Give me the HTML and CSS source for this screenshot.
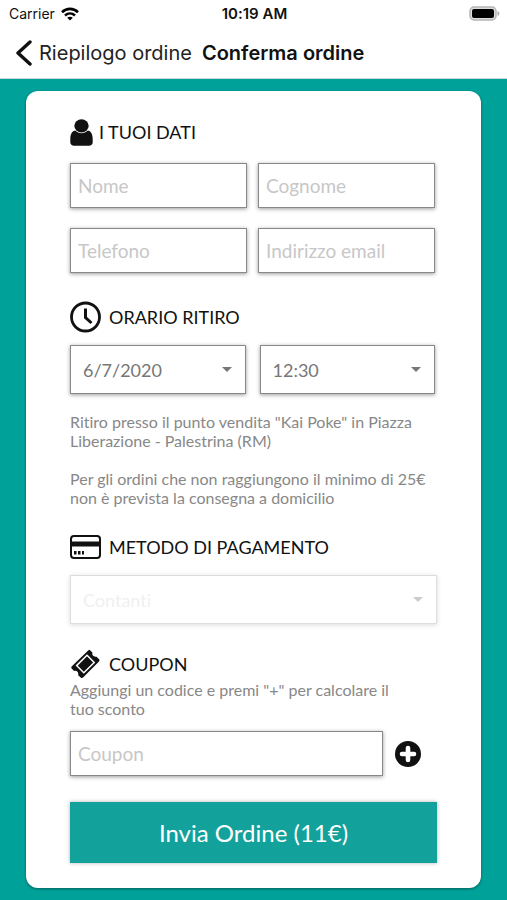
FILE: index.html
```html
<!DOCTYPE html>
<html lang="it">
<head>
  <meta charset="UTF-8" />
  <meta name="viewport" content="width=device-width, initial-scale=1.0"/>
  <title>Conferma ordine</title>
  <link rel="stylesheet" href="styles.css">
</head>
<body>
  <header>
    <div class="status">
      <span class="carrier">Carrier
        <svg width="18" height="14" viewBox="0 0 18 14" fill="none" stroke="#000" stroke-width="2.6">
          <path d="M1 5.2C5.6.8 12.4.8 17 5.2"/>
          <path d="M4 8.5C7 5.8 11 5.8 14 8.5"/>
          <path d="M9 13.6L6.2 10.8C7.8 9.3 10.2 9.3 11.8 10.8Z" fill="#000" stroke="none"/>
        </svg>
      </span>
      <span class="time">10:19 AM</span>
      <span class="battery">
        <svg width="31" height="15" viewBox="0 0 31 15">
          <rect x="1" y="1" width="26" height="13" rx="4" fill="#ddd" stroke="#b5b5b5" stroke-width="1.5"/>
          <rect x="3" y="3" width="22" height="9" rx="2" fill="#000"/>
          <path d="M28.5 5C31 6 31 9 28.5 10Z" fill="#aaa"/>
        </svg>
      </span>
    </div>
    <nav>
      <a class="back" href="#">
        <svg width="16" height="26" viewBox="0 0 16 26" fill="none" stroke="#111" stroke-width="3.4" stroke-linecap="round" stroke-linejoin="round">
          <path d="M14 2L2 13L14 24"/>
        </svg>
        Riepilogo ordine
      </a>
      <h1>Conferma ordine</h1>
    </nav>
  </header>

  <main>
    <form class="card">
      <h2 class="tight">
        <svg width="23" height="27" viewBox="0 0 23 27" fill="#111">
          <path d="M5 11.6C1.6 12.4.3 16 .3 20.5V23.5C.3 25.5 2 26.7 4 26.7H19C21 26.7 22.7 25.5 22.7 23.5V20.5C22.7 16 21.4 12.4 18 11.6C14.4 15 8.6 15 5 11.6Z"/>
          <ellipse cx="11.5" cy="6.8" rx="7.2" ry="6.6"/>
        </svg>
        I TUOI DATI
      </h2>
      <div class="fields">
        <input type="text" placeholder="Nome" aria-label="Nome" />
        <input type="text" placeholder="Cognome" aria-label="Cognome" />
        <input type="tel" placeholder="Telefono" aria-label="Telefono" />
        <input type="email" placeholder="Indirizzo email" aria-label="Indirizzo email" />
      </div>

      <h2>
        <svg width="31" height="32" viewBox="0 0 31 32" fill="none" stroke="#111">
          <circle cx="15.5" cy="16" r="14" stroke-width="2.8"/>
          <path d="M15.5 7.5V16.5L21.5 22" stroke-width="3"/>
        </svg>
        ORARIO RITIRO
      </h2>
      <div class="pickup">
        <select aria-label="Data ritiro"><option>6/7/2020</option></select>
        <select aria-label="Ora ritiro"><option>12:30</option></select>
      </div>
      <p class="note">Ritiro presso il punto vendita "Kai Poke" in Piazza Liberazione - Palestrina (RM)</p>
      <p class="note">Per gli ordini che non raggiungono il minimo di 25€ non è prevista la consegna a domicilio</p>

      <h2>
        <svg width="31" height="24" viewBox="0 0 31 24">
          <rect x="1" y="1" width="29" height="22" rx="3" fill="#fff" stroke="#111" stroke-width="2"/>
          <path d="M1 6.5H30V11.5H1Z" fill="#111"/>
          <path d="M4 16H6.5V19.5H4ZM8 16H10.5V19.5H8ZM12 16H14V19.5H12Z" fill="#111"/>
        </svg>
        METODO DI PAGAMENTO
      </h2>
      <select aria-label="Metodo di pagamento" disabled><option>Contanti</option></select>

      <h2>
        <svg width="31" height="30" viewBox="0 0 31 30">
          <path d="M18.2 1.4L19.5.7L22.4 3.6C21.7 6.2 23.6 8.2 26.5 7.7L29.6 10.8L29 12.4L12.8 28.8L11.2 29.1L8.2 26.2C8.8 23.3 7 21.4 4.1 21.9L1.2 19L1.6 17.6Z" fill="#111"/>
          <path d="M17 6.3L24.2 13.5L13.8 23.8L6.6 16.6Z" fill="none" stroke="#fff" stroke-width="1.5"/>
        </svg>
        COUPON
      </h2>
      <p class="hint">Aggiungi un codice e premi "+" per calcolare il tuo sconto</p>
      <div class="coupon">
        <input type="text" placeholder="Coupon" aria-label="Coupon" />
        <button type="button" class="add" aria-label="Aggiungi coupon">
          <svg width="26" height="26" viewBox="0 0 26 26">
            <circle cx="13" cy="13" r="13" fill="#111"/>
            <path d="M13 7V19M7 13H19" stroke="#fff" stroke-width="4.6" stroke-linecap="round"/>
          </svg>
        </button>
      </div>

      <button type="submit" class="send">Invia Ordine (11€)</button>
    </form>
  </main>
</body>
</html>
```
FILE: styles.css
```css
* {
  box-sizing: border-box;
}
body {
  margin: 0;
  min-height: 100vh;
  background: #00a199;
  font-family: Lato, sans-serif;
  font-variant-ligatures: none;
  color: #111;
}
header {
  background: #fff;
  border-bottom: 1px solid #c4d8d6;
  font-family: Inter, sans-serif;
}
.status {
  display: grid;
  grid-template-columns: 1fr auto 1fr;
  align-items: center;
  height: 27px;
  padding: 0 7px 0 9px;
  font-size: 14px;
}
.carrier {
  display: flex;
  align-items: center;
  gap: 6px;
}
.time {
  font-size: 15px;
  font-weight: 600;
}
.battery {
  display: flex;
  justify-content: flex-end;
}
nav {
  display: flex;
  align-items: center;
  gap: 10px;
  height: 51px;
  padding-left: 16px;
}
.back {
  display: flex;
  align-items: center;
  gap: 7px;
  font-size: 20px;
  color: #222;
  text-decoration: none;
}
h1 {
  margin: 0;
  font-size: 20px;
  font-weight: 600;
}
main {
  padding: 12px 26px;
}
.card {
  background: #fff;
  border-radius: 12px;
  padding: 25px 44px;
  box-shadow: 0 1px 3px rgba(0,0,0,0.4);
}
h2 {
  display: flex;
  align-items: center;
  gap: 8px;
  height: 32px;
  margin: 24px 0 12px;
  font-size: 18px;
  line-height: 22px;
  font-weight: 400;
}
h2.tight {
  gap: 6px;
  margin: 0 0 15px;
}
.fields, .pickup {
  display: grid;
  grid-template-columns: 1fr 1fr;
  gap: 20px 11px;
  padding-right: 2px;
}
.fields {
  margin-bottom: 28px;
}
.pickup {
  column-gap: 14px;
  margin-bottom: 18px;
}
input, select {
  width: 100%;
  min-width: 0;
  border: 1px solid #888;
  border-radius: 0;
  background-color: #fff;
  font-family: inherit;
  font-variant-ligatures: none;
  box-shadow: 0 1px 4px rgba(0,0,0,0.4);
}
input {
  height: 45px;
  padding: 0 7px;
  font-size: 19px;
}
input::placeholder {
  color: #c7c7c7;
}
select {
  appearance: none;
  height: 49px;
  padding: 0 12px;
  font-size: 18px;
  color: #777;
  background-image: url("data:image/svg+xml,%3Csvg xmlns='http://www.w3.org/2000/svg' width='10' height='5'%3E%3Cpath d='M0 0H10L5 5Z' fill='%23777'/%3E%3C/svg%3E");
  background-repeat: no-repeat;
  background-position: right 13px center;
}
select:disabled {
  color: #f0f0f0;
  opacity: 1;
  border-color: #ddd;
  box-shadow: 0 1px 5px rgba(0,0,0,0.15);
  background-image: url("data:image/svg+xml,%3Csvg xmlns='http://www.w3.org/2000/svg' width='10' height='5'%3E%3Cpath d='M0 0H10L5 5Z' fill='%23ccc'/%3E%3C/svg%3E");
}
.note, .hint {
  margin: 0 0 19px;
  font-size: 16px;
  line-height: 19px;
  color: #888;
}
.hint {
  margin: -12px 36px 13px 0;
}
.coupon {
  display: flex;
  align-items: center;
  gap: 12px;
  padding-right: 16px;
}
.add {
  display: flex;
  padding: 0;
  border: none;
  background: none;
}
.send {
  display: block;
  width: 100%;
  height: 61px;
  margin-top: 26px;
  border: none;
  background: #13a19b;
  color: #fff;
  font-family: inherit;
  font-size: 24px;
  box-shadow: 0 0 4px rgba(0,0,0,0.3);
}
```
